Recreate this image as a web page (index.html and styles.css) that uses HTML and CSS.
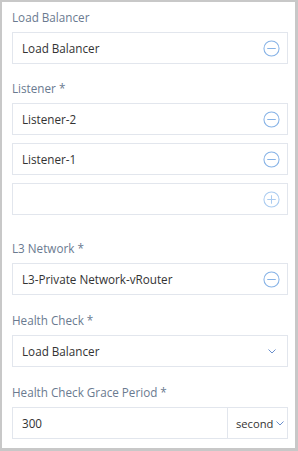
FILE: index.html
```html
<!DOCTYPE html>
<html lang="en">
<head>
  <meta charset="UTF-8" />
  <title>Load Balancer Form</title>
  <link rel="stylesheet" href="styles.css">
</head>
<body>
  <div class="panel">
    <div class="field first">
      <div class="label">Load Balancer</div>
      <div class="box"><span class="value">Load Balancer</span>
        <svg class="icon" viewBox="0 0 18 18"><circle cx="9" cy="9" r="8"/><path d="M4.5 9h9"/></svg>
      </div>
    </div>

    <div class="field">
      <div class="label">Listener *</div>
      <div class="stack">
        <div class="box"><span class="value">Listener-2</span>
          <svg class="icon" viewBox="0 0 18 18"><circle cx="9" cy="9" r="8"/><path d="M4.5 9h9"/></svg>
        </div>
        <div class="box"><span class="value">Listener-1</span>
          <svg class="icon" viewBox="0 0 18 18"><circle cx="9" cy="9" r="8"/><path d="M4.5 9h9"/></svg>
        </div>
        <div class="box"><span class="value"></span>
          <svg class="icon add" viewBox="0 0 18 18"><circle cx="9" cy="9" r="8"/><path d="M4.5 9h9M9 4.5v9"/></svg>
        </div>
      </div>
    </div>

    <div class="field">
      <div class="label">L3 Network *</div>
      <div class="box"><span class="value">L3-Private Network-vRouter</span>
        <svg class="icon" viewBox="0 0 18 18"><circle cx="9" cy="9" r="8"/><path d="M4.5 9h9"/></svg>
      </div>
    </div>

    <div class="field">
      <div class="label">Health Check *</div>
      <div class="box select"><span class="value">Load Balancer</span>
        <svg class="chev" viewBox="0 0 8 5"><path d="M0.5 0.5l3.5 3.5 3.5-3.5"/></svg>
      </div>
    </div>

    <div class="field">
      <div class="label">Health Check Grace Period *</div>
      <div class="box split">
        <span class="value">300</span>
        <div class="unit">second
          <svg class="chev" viewBox="0 0 8 5"><path d="M0.5 0.5l3.5 3.5 3.5-3.5"/></svg>
        </div>
      </div>
    </div>
  </div>
</body>
</html>
```

FILE: styles.css
```css
html, body { margin: 0; padding: 0; background: #c8c8c8; }
body { font-family: 'Open Sans', sans-serif; font-size: 11.7px; }
.panel { width: 293px; height: 446px; margin-left: 2px; margin-top: 2px; background: #fff; box-sizing: border-box; padding: 5px 7px 0 10px; overflow: hidden; }
.field { margin-bottom: 15px; }
.field.first { margin-bottom: 14px; }
.label { color: #6a7a90; line-height: 20px; margin-bottom: 5px; }
.box { display: flex; align-items: center; height: 32px; border: 1px solid #e2e6ed; box-sizing: border-box; padding: 0 7px 0 9px; color: #333; }
.stack { display: flex; flex-direction: column; gap: 8px; padding-bottom: 8px; }
.value { flex: 1; white-space: nowrap; }
.icon { width: 17px; height: 17px; fill: none; stroke: #86b2e6; stroke-width: 1.1; }
.icon.add { stroke: #aacbf0; }
.chev { width: 8px; height: 5px; fill: none; stroke: #6a8fcc; stroke-width: 1; }
.select { padding-right: 11px; }
.split { padding-right: 0; }
.unit { display: flex; align-items: center; height: 100%; border-left: 1px solid #e2e6ed; padding: 0 0 0 8px; gap: 3px; width: 60px; box-sizing: border-box; font-size: 11.2px; }
```
